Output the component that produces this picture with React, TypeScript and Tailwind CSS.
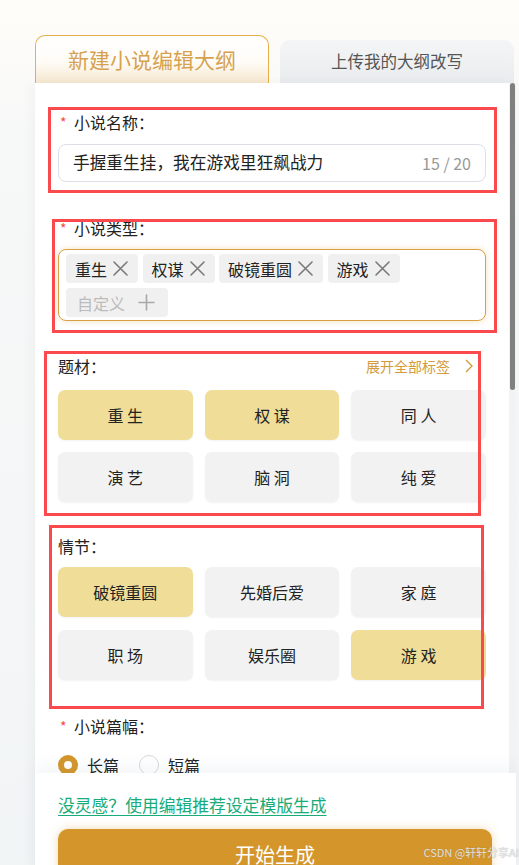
import React from "react";

const XIcon = () => (
  <svg width="17" height="17" viewBox="0 0 17 17" className="shrink-0">
    <path d="M2 2 L15 15 M15 2 L2 15" stroke="#7a7a7a" strokeWidth="1.6" strokeLinecap="round" />
  </svg>
);

const PlusIcon = () => (
  <svg width="17" height="17" viewBox="0 0 17 17" className="shrink-0">
    <path d="M8.5 1 V16 M1 8.5 H16" stroke="#a8a8a8" strokeWidth="1.6" strokeLinecap="round" />
  </svg>
);

const Label = ({ text, required }: { text: string; required?: boolean }) => (
  <div className="flex items-center h-[24px] text-[16px] text-[#222] leading-[24px]">
    {required && <span className="text-[#f5484b] text-[14px] w-[14px] ml-[2px]">*</span>}
    <span>{text}</span>
  </div>
);

const Chip = ({ text, on }: { text: string; on?: boolean }) => (
  <div
    className={
      "h-[50px] rounded-[7px] flex items-center justify-center text-[16px] text-[#222] shadow-[0_1px_2px_rgba(0,0,0,0.05)] " +
      (on ? "bg-[#efdd98]" : "bg-[#f2f2f2]")
    }
  >
    {text}
  </div>
);

const Tag = ({ text }: { text: string }) => (
  <div className="h-[29px] rounded-[4px] bg-[#f0f0f0] flex items-center pl-[9px] pr-[9px] gap-[5px] text-[16px] text-[#222]">
    <span>{text}</span>
    <XIcon />
  </div>
);

export default function App() {
  return (
    <div
      className="w-[519px] h-[865px] overflow-hidden relative bg-[linear-gradient(180deg,#fffdf9_0%,#f7f8f8_15%,#f2f5f6_100%)]"
      style={{ fontFamily: '"Noto Sans CJK SC", "Liberation Sans", sans-serif' }}
    >
      {/* Tabs */}
      <div className="flex items-end pl-[35px] pt-[35px] gap-[11px]">
        <div className="w-[234px] h-[48px] rounded-t-[10px] border border-b-0 border-[#e8ae48] bg-[linear-gradient(180deg,#ffffff_0%,#fffcf7_55%,#f5e7cf_100%)] flex items-center justify-center text-[21px] text-[#d6a24f]">
          新建小说编辑大纲
        </div>
        <div className="w-[234px] h-[43px] rounded-t-[10px] bg-[linear-gradient(180deg,#f4f5f6_0%,#e9ecee_100%)] flex items-center justify-center text-[16.5px] text-[#555]">
          上传我的大纲改写
        </div>
      </div>

      {/* Panel */}
      <div className="ml-[35px] w-[481px] h-[782px] bg-white relative flex flex-col shadow-[-4px_0_10px_rgba(0,0,0,0.03)]">
        {/* scroll area */}
        <div className="h-[690px] shrink-0 overflow-hidden pl-[23px] pr-[30px] pt-[27px]">
          <Label text="小说名称：" required />
          <div className="mt-[10px] h-[38px] w-[428px] rounded-[8px] border border-[#dcdfe6] flex items-center justify-between pl-[14px] pr-[14px]">
            <span className="text-[16.7px] text-[#222]">手握重生挂，我在游戏里狂飙战力</span>
            <span className="text-[16px] text-[#999]">15 / 20</span>
          </div>

          <div className="mt-[34px]">
            <Label text="小说类型：" required />
          </div>
          <div className="mt-[9px] w-[428px] h-[72px] rounded-[8px] border border-[#d8a043] shadow-[0_0_6px_rgba(226,170,70,0.35)] pl-[7px] pt-[4px] flex flex-wrap content-start gap-x-[4.5px] gap-y-[5px]">
            <Tag text="重生" />
            <Tag text="权谋" />
            <Tag text="破镜重圆" />
            <Tag text="游戏" />
            <div className="h-[29px] rounded-[4px] bg-[#f0f0f0] flex items-center pl-[11px] pr-[13px] gap-[13px] text-[16px] text-[#bbbbbb]">
              <span>自定义</span>
              <PlusIcon />
            </div>
          </div>

          <div className="mt-[33px] w-[428px] pr-[13px] flex items-center justify-between">
            <Label text="题材：" />
            <div className="flex items-center gap-[15px] text-[14px] text-[#d49b3c]">
              <span>展开全部标签</span>
              <svg width="8" height="14" viewBox="0 0 8 14">
                <path d="M1 1 L7 7 L1 13" fill="none" stroke="#d49b3c" strokeWidth="1.4" />
              </svg>
            </div>
          </div>
          <div className="mt-[12px] w-[428px] grid grid-cols-3 gap-x-[12px] gap-y-[12px]">
            <Chip text="重 生" on />
            <Chip text="权 谋" on />
            <Chip text="同 人" />
            <Chip text="演 艺" />
            <Chip text="脑 洞" />
            <Chip text="纯 爱" />
          </div>

          <div className="mt-[32px]">
            <Label text="情节：" />
          </div>
          <div className="mt-[9px] w-[428px] grid grid-cols-3 gap-x-[12px] gap-y-[13px]">
            <Chip text="破镜重圆" on />
            <Chip text="先婚后爱" />
            <Chip text="家 庭" />
            <Chip text="职 场" />
            <Chip text="娱乐圈" />
            <Chip text="游 戏" on />
          </div>

          <div className="mt-[34px]">
            <Label text="小说篇幅：" required />
          </div>
          <div className="mt-[15px] flex items-center h-[24px] text-[16px] text-[#222]">
            <div className="w-[20px] h-[20px] rounded-full bg-[#d4962a] flex items-center justify-center">
              <div className="w-[8px] h-[8px] rounded-full bg-white" />
            </div>
            <span className="ml-[9px]">长篇</span>
            <div className="ml-[20px] w-[20px] h-[20px] rounded-full border border-[#d9d9d9] bg-white" />
            <span className="ml-[9px]">短篇</span>
          </div>
        </div>

        {/* scrollbar */}
        <div className="absolute right-[0px] top-0 w-[7px] h-[690px] bg-[#f1f3f4]">
          <div className="ml-[1px] w-[5px] h-[307px] rounded-full bg-[#808080]" />
        </div>

        {/* bottom area */}
        <div className="flex-1 bg-white relative pl-[23px] pt-[20px] shadow-[0_-8px_14px_rgba(120,140,150,0.07)]">
          <div className="h-[24px] leading-[24px] text-[16.8px] text-[#17ac79] underline underline-offset-[3px]">
            没灵感？使用编辑推荐设定模版生成
          </div>
          <div className="mt-[12px] w-[434px] h-[52px] rounded-[10px] bg-[#d4962a] shadow-[0_0_10px_rgba(212,150,42,0.35)] flex items-center justify-center text-[20px] text-white">
            开始生成
          </div>
        </div>
      </div>

      {/* annotation boxes */}
      <div className="absolute left-[48px] top-[107px] w-[449px] h-[86px] border-[3px] border-[#fb4a4d] pointer-events-none" />
      <div className="absolute left-[52px] top-[219px] w-[445px] h-[114px] border-[3px] border-[#fb4a4d] pointer-events-none" />
      <div className="absolute left-[44px] top-[351px] w-[437px] h-[165px] border-[3px] border-[#fb4a4d] pointer-events-none" />
      <div className="absolute left-[49px] top-[525px] w-[435px] h-[184px] border-[3px] border-[#fb4a4d] pointer-events-none" />

      {/* watermark */}
      <div className="absolute right-[0px] top-[845px] text-[11px] leading-[15px] text-[rgba(235,235,235,0.9)] [text-shadow:0_0_1px_rgba(120,120,120,0.6)] pointer-events-none">
        CSDN @轩轩分享AI
      </div>
    </div>
  );
}
